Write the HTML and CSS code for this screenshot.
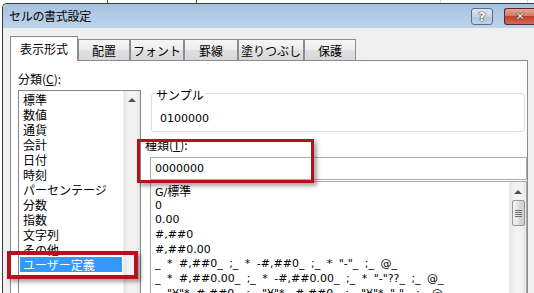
FILE: index.html
```html
<!DOCTYPE html>
<html lang="ja">
<head>
<meta charset="utf-8">
<title>セルの書式設定</title>
<link rel="stylesheet" href="styles.css">
</head>
<body>
<div class="sheet-strip"></div>
<div class="dialog">
  <div class="titlebar">
    <span class="title">セルの書式設定</span>
    <span class="btn-help">?</span>
    <span class="btn-close">✕</span>
  </div>
  <div class="client">
    <div class="tabs">
      <div class="tab active t1">表示形式</div>
      <div class="tab t2">配置</div>
      <div class="tab t3">フォント</div>
      <div class="tab t4">罫線</div>
      <div class="tab t5">塗りつぶし</div>
      <div class="tab t6">保護</div>
    </div>
    <div class="panel">
      <div class="col-left">
        <div class="label">分類(<u>C</u>):</div>
        <div class="listbox cat">
          <div class="items">
            <div class="item">標準</div>
            <div class="item">数値</div>
            <div class="item">通貨</div>
            <div class="item">会計</div>
            <div class="item">日付</div>
            <div class="item">時刻</div>
            <div class="item">パーセンテージ</div>
            <div class="item">分数</div>
            <div class="item">指数</div>
            <div class="item">文字列</div>
            <div class="item">その他</div>
            <div class="item selected">ユーザー定義</div>
          </div>
          <div class="vscroll">
            <div class="arrow-up"></div>
          </div>
        </div>
      </div>
      <div class="col-right">
        <fieldset class="sample">
          <legend>サンプル</legend>
          <div class="sample-value latin">0100000</div>
        </fieldset>
        <div class="label type-label">種類(<u>T</u>):</div>
        <div class="textbox latin">0000000</div>
        <div class="listbox formats">
          <div class="items">
            <div class="fitem">G/<span class="ja">標準</span></div>
            <div class="fitem">0</div>
            <div class="fitem">0.00</div>
            <div class="fitem">#,##0</div>
            <div class="fitem">#,##0.00</div>
            <div class="fitem">_ * #,##0_ ;_ * -#,##0_ ;_ * "-"_ ;_ @_</div>
            <div class="fitem">_ * #,##0.00_ ;_ * -#,##0.00_ ;_ * "-"??_ ;_ @_</div>
            <div class="fitem">_ "¥"* #,##0_ ;_ "¥"* -#,##0_ ;_ "¥"* "-"_ ;_ @_</div>
          </div>
          <div class="vscroll">
            <div class="arrow-up"></div>
            <div class="thumb"><span></span><span></span><span></span><span></span></div>
          </div>
        </div>
      </div>
    </div>
  </div>
</div>
<div class="mark mark-type"></div>
<div class="mark mark-user"></div>
</body>
</html>
```
FILE: styles.css
```css
html, body {
  margin: 0;
  padding: 0;
}
body {
  width: 534px;
  height: 293px;
  overflow: hidden;
  position: relative;
  background: #ffffff;
  font-family: "Noto Sans CJK JP", "Noto Sans", sans-serif;
  font-size: 12px;
  color: #000;
}
.sheet-strip {
  height: 3px;
  background:
    linear-gradient(90deg, transparent 107px, #2d6b3c 107px, #2d6b3c 108px, transparent 108px,
      transparent 196px, #2d6b3c 196px, #2d6b3c 197px, transparent 197px,
      transparent 440px, #d4d4d4 440px, #d4d4d4 441px, transparent 441px,
      transparent 527px, #d4d4d4 527px, #d4d4d4 528px, transparent 528px),
    #ffffff;
}
.dialog {
  margin-left: 2px;
  width: 532px;
  border-top: 1px solid #3b3b3b;
  border-left: 1px solid #3b3b3b;
  border-top-left-radius: 5px;
  background: #f0f0f0;
  height: 300px;
  overflow: hidden;
}
.titlebar {
  height: 24px;
  display: flex;
  align-items: flex-start;
  background: linear-gradient(#a8c2de, #bcd3ec);
}
.title {
  flex: 1;
  line-height: 24px;
  padding-left: 6px;
  font-size: 12px;
  letter-spacing: -0.3px;
}
.btn-help, .btn-close {
  margin-top: 4px;
  height: 15px;
  border: 1px solid #5e6d80;
  border-radius: 3px;
  display: flex;
  align-items: center;
  justify-content: center;
  font-family: "DejaVu Sans", sans-serif;
  font-weight: bold;
  line-height: 15px;
}
.btn-help {
  width: 20px;
  margin-right: 11px;
  background: linear-gradient(#dbe6f3 0%, #c4d5ea 50%, #aec4df 51%, #bed3ea 100%);
  color: #fff;
  font-size: 13px;
  text-shadow: 0 0 1px #333, 0 0 1px #333, 0 0 1px #333;
}
.btn-close {
  width: 30px;
  border-color: #5b2c25;
  border-right: none;
  border-radius: 3px 0 0 3px;
  background: linear-gradient(#e7a595 0%, #d47a68 45%, #c2402d 50%, #cf6a55 100%);
  color: #fff;
  font-size: 11px;
  text-shadow: 0 0 1px #3a1a14, 0 0 1px #3a1a14, 0 0 1px #3a1a14;
}
.client {
  padding-top: 8px;
}
.tabs {
  display: flex;
  align-items: flex-end;
  margin-left: 7px;
  height: 24px;
  position: relative;
  z-index: 1;
}
.tab {
  box-sizing: border-box;
  height: 21px;
  border: 1px solid #898c95;
  border-bottom: none;
  background: linear-gradient(#f6f6f6 0%, #ededed 50%, #e0e0e0 51%, #d8d8d8 100%);
  text-align: center;
  line-height: 21px;
}
.tab.active {
  height: 25px;
  margin-bottom: -1px;
  background: #ffffff;
  line-height: 23px;
}
.t1 { width: 68px; }
.t2 { width: 52px; }
.t3 { width: 54px; }
.t4 { width: 54px; }
.t5 { width: 66px; }
.t6 { width: 52px; }
.panel {
  margin-left: 7px;
  width: 518px;
  box-sizing: border-box;
  height: 260px;
  border: 1px solid #898c95;
  background: #ffffff;
  display: grid;
  grid-template-columns: 123px 1fr;
  column-gap: 4px;
  padding: 10px 0 0 7px;
}
.label {
  line-height: 15px;
}
.latin {
  font-family: "DejaVu Sans", "Noto Sans CJK JP", sans-serif;
  font-size: 11px;
}
.listbox {
  border: 1px solid #828790;
  display: flex;
  background: #fff;
}
.listbox .items {
  flex: 1;
  min-width: 0;
}
.cat {
  margin-top: 4px;
  height: 220px;
}
.cat .items {
  padding: 1px 1px 0 1px;
}
.item {
  line-height: 15px;
  padding-left: 3px;
  white-space: nowrap;
}
.item.selected {
  background: #3399ff;
  color: #fff;
}
.vscroll {
  width: 16px;
  background: linear-gradient(90deg, #e6e6e6, #f3f3f3 30%, #f3f3f3 70%, #e6e6e6);
  border-left: 1px solid #ececec;
  display: flex;
  flex-direction: column;
  align-items: center;
}
.arrow-up {
  margin-top: 7px;
  width: 0;
  height: 0;
  border-left: 4px solid transparent;
  border-right: 4px solid transparent;
  border-bottom: 4px solid #505050;
}
.col-right {
  padding-top: 13px;
}
.sample {
  margin: 0 2px 0 6px;
  padding: 9px 0 5px 8px;
  border: 1px solid #d5dfe5;
  border-radius: 3px;
  min-width: 0;
}
.sample legend {
  padding: 4px 1px 0 1px;
  margin-left: -5px;
  line-height: 14px;
}
.sample-value {
  line-height: 15px;
}
.type-label {
  margin-top: 5px;
}
.textbox {
  margin: 5px 0 0 5px;
  height: 23px;
  box-sizing: border-box;
  border: 1px solid #abadb3;
  border-right-color: #a9a9a9;
  line-height: 21px;
  padding-left: 4px;
}
.formats {
  margin: 1px 0 0 5px;
  height: 140px;
  border-color: #a9a9a9;
}
.formats .items {
  padding: 2px 0 0 4px;
  overflow: hidden;
}
.fitem {
  font-family: "DejaVu Sans", "Noto Sans CJK JP", sans-serif;
  font-size: 11px;
  line-height: 14.7px;
  height: 14.7px;
  white-space: pre;
  word-spacing: 3px;
}
.fitem .ja {
  font-family: "Noto Sans CJK JP", sans-serif;
  font-size: 12px;
}
.formats .vscroll {
  width: 16px;
}
.formats .arrow-up {
  margin-top: 8px;
}
.thumb {
  margin-top: 6px;
  width: 13px;
  height: 26px;
  box-sizing: border-box;
  border: 1px solid #979797;
  border-radius: 2px;
  background: linear-gradient(90deg, #f4f4f4, #e4e4e4 50%, #d6d6d6 51%, #cfcfcf);
  display: flex;
  flex-direction: column;
  align-items: center;
  justify-content: center;
  gap: 1px;
}
.thumb span {
  display: block;
  width: 7px;
  height: 1px;
  background: #6f6f6f;
}
.mark {
  position: absolute;
  box-sizing: border-box;
  border-style: solid;
  border-color: #b5121b;
  box-shadow: 3px 3px 4px rgba(0, 0, 0, 0.35);
}
.mark-type {
  left: 137px;
  top: 139px;
  width: 177px;
  height: 44px;
  border-width: 3px;
}
.mark-user {
  left: 7px;
  top: 251px;
  width: 131px;
  height: 28px;
  border-width: 4px;
}
```
